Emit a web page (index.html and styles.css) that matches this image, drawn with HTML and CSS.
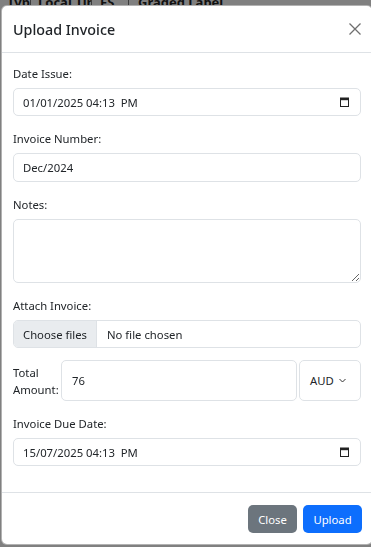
FILE: index.html
```html
<!DOCTYPE html>
<html lang="en">
<head>
  <meta charset="UTF-8">
  <title>Upload Invoice</title>
  <link rel="stylesheet" href="styles.css">
</head>
<body>

  <div class="behind">
    <div class="th th-1">Type</div>
    <div class="th th-2">Local Time</div>
    <div class="th th-3">FS</div>
    <div class="th th-4">Graded Label</div>
  </div>

  <div class="modal">
    <div class="modal-header">
      <h5 class="modal-title">Upload Invoice</h5>
      <button class="btn-close" aria-label="Close">
        <svg width="12" height="12" viewBox="0 0 12 12">
          <path d="M0.5 0.5 L11.5 11.5 M11.5 0.5 L0.5 11.5" stroke="#6f6f6f" stroke-width="1.3" fill="none"/>
        </svg>
      </button>
    </div>

    <div class="modal-body">
      <div class="field">
        <label>Date Issue:</label>
        <div class="form-control date-control">
          <span>01/01/2025 04:13&nbsp; PM</span>
          <svg class="cal" width="9" height="10" viewBox="0 0 9 10">
            <rect x="0.5" y="1" width="8" height="8.5" fill="none" stroke="#222" stroke-width="1"/>
            <rect x="0.5" y="1" width="8" height="2.2" fill="#222"/>
          </svg>
        </div>
      </div>

      <div class="field">
        <label>Invoice Number:</label>
        <input class="form-control" type="text" value="Dec/2024">
      </div>

      <div class="field">
        <label>Notes:</label>
        <textarea class="form-control notes"></textarea>
      </div>

      <div class="field">
        <label>Attach Invoice:</label>
        <div class="form-control file-control">
          <span class="file-btn">Choose files</span>
          <span class="file-name">No file chosen</span>
        </div>
      </div>

      <div class="field amount-row">
        <label class="amount-label">Total<br>Amount:</label>
        <input class="form-control amount" type="text" value="76">
        <div class="form-control currency">
          <span>AUD</span>
          <svg width="7" height="5" viewBox="0 0 7 5">
            <path d="M0.5 1 L3.5 4 L6.5 1" stroke="#333" stroke-width="1" fill="none"/>
          </svg>
        </div>
      </div>

      <div class="field">
        <label>Invoice Due Date:</label>
        <div class="form-control date-control">
          <span>15/07/2025 04:13&nbsp; PM</span>
          <svg class="cal" width="9" height="10" viewBox="0 0 9 10">
            <rect x="0.5" y="1" width="8" height="8.5" fill="none" stroke="#222" stroke-width="1"/>
            <rect x="0.5" y="1" width="8" height="2.2" fill="#222"/>
          </svg>
        </div>
      </div>
    </div>

    <div class="modal-footer">
      <button class="btn btn-secondary">Close</button>
      <button class="btn btn-primary">Upload</button>
    </div>
  </div>

</body>
</html>
```

FILE: styles.css
```css
body {
  margin: 0;
  background-color: #808080;
  font-family: "Noto Sans", "Open Sans", sans-serif;
  font-size: 11.3px;
  color: #212529;
  overflow: hidden;
}

.behind {
  display: flex;
  height: 20px;
  margin-top: -7px;
  font-weight: bold;
  font-size: 13px;
  line-height: 18px;
  color: #111;
  white-space: nowrap;
  overflow: hidden;
}

.th {
  padding-left: 7px;
  border-right: 1px solid #3c3c3c;
  overflow: hidden;
}

.th-1 { width: 23px; }
.th-2 { width: 53px; }
.th-3 { width: 28px; padding-left: 8px; }
.th-4 { width: 120px; padding-left: 9px; border-right: none; }

.modal {
  position: fixed;
  top: 5px;
  left: 1px;
  width: 372px;
  height: 540px;
  box-sizing: border-box;
  background: #fff;
  border: 1px solid rgba(0, 0, 0, 0.3);
  border-radius: 6px;
  display: flex;
  flex-direction: column;
}

.modal-header {
  height: 46px;
  padding: 0 11px;
  display: flex;
  align-items: center;
  justify-content: space-between;
  border-bottom: 1px solid #dee2e6;
}

.modal-title {
  margin: 0;
  font-size: 14.3px;
  font-weight: 500;
}

.btn-close {
  background: none;
  border: none;
  padding: 0;
  width: 12px;
  height: 12px;
  display: flex;
  cursor: pointer;
}

.modal-body {
  padding: 12px 11px 0;
  flex: 1;
}

.field {
  margin-bottom: 14px;
}

.field label {
  display: block;
  line-height: 18px;
  margin-bottom: 5px;
}

.form-control {
  display: block;
  width: 100%;
  box-sizing: border-box;
  height: 29px;
  padding: 0 9px;
  font-family: inherit;
  font-size: 11.3px;
  color: #212529;
  background: #fff;
  border: 1px solid #dee2e6;
  border-radius: 5px;
  outline: none;
}

.date-control {
  display: flex;
  align-items: center;
  justify-content: space-between;
  height: 28px;
  padding-right: 11px;
}

.notes {
  height: 64px;
  resize: vertical;
  padding: 6px 9px;
}

.file-control {
  display: flex;
  align-items: center;
  height: 28px;
  padding: 0;
  overflow: hidden;
}

.file-btn {
  height: 100%;
  display: flex;
  align-items: center;
  padding: 0 9px;
  background: #e9ecef;
  border-right: 1px solid #dee2e6;
}

.file-name {
  padding-left: 10px;
}

.amount-row {
  display: flex;
  align-items: stretch;
  height: 41px;
  margin-top: -2px;
}

.amount-row .amount-label {
  margin: 0;
  width: 48px;
  display: flex;
  align-items: center;
  line-height: 17px;
}

.amount {
  flex: 1;
  height: 41px;
  padding-left: 10px;
}

.currency {
  width: 62px;
  height: 41px;
  margin-left: 2px;
  display: flex;
  align-items: center;
  justify-content: space-between;
  padding: 0 14px 0 10px;
}

.modal-footer {
  border-top: 1px solid #dee2e6;
  display: flex;
  justify-content: flex-end;
  gap: 6px;
  padding: 12px 10px 11px;
}

.btn {
  height: 28px;
  border: none;
  border-radius: 5px;
  color: #fff;
  font-family: inherit;
  font-size: 11.3px;
  padding: 0 8px;
  cursor: pointer;
}

.btn-secondary {
  background-color: #6c757d;
  width: 49px;
}

.btn-primary {
  background-color: #0d6efd;
  width: 59px;
}
```
